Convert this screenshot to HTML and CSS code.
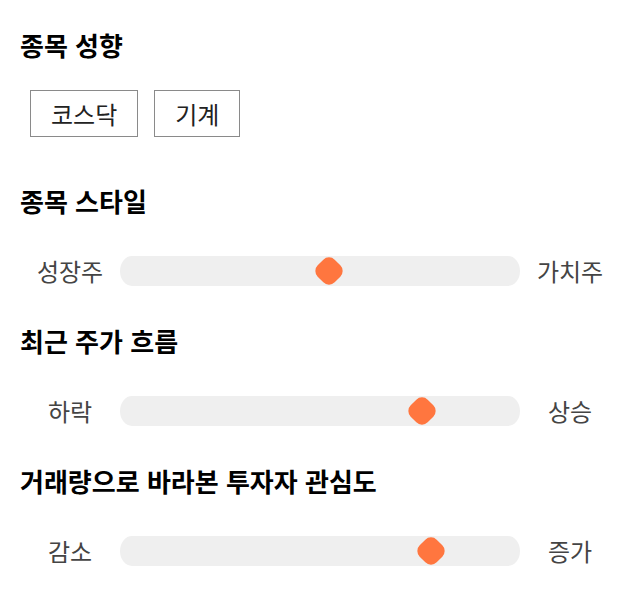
FILE: index.html
```html
<!DOCTYPE html>
<html lang="ko">
<head>
<meta charset="utf-8">
<link rel="stylesheet" href="styles.css">
</head>
<body>
<div class="page">
  <section class="section">
    <h2 class="title">종목 성향</h2>
    <div class="tags">
      <span class="tag">코스닥</span>
      <span class="tag">기계</span>
    </div>
  </section>
  <section class="section">
    <h2 class="title">종목 스타일</h2>
    <div class="slider">
      <span class="label">성장주</span>
      <div class="track"><span class="thumb" style="left: 52.3%"></span></div>
      <span class="label">가치주</span>
    </div>
  </section>
  <section class="section">
    <h2 class="title">최근 주가 흐름</h2>
    <div class="slider">
      <span class="label">하락</span>
      <div class="track"><span class="thumb" style="left: 75.5%"></span></div>
      <span class="label">상승</span>
    </div>
  </section>
  <section class="section">
    <h2 class="title">거래량으로 바라본 투자자 관심도</h2>
    <div class="slider">
      <span class="label">감소</span>
      <div class="track"><span class="thumb" style="left: 77.8%"></span></div>
      <span class="label">증가</span>
    </div>
  </section>
</div>
</body>
</html>
```
FILE: styles.css
```css
* { box-sizing: border-box; }
html, body { margin: 0; padding: 0; background: #fff; }
body {
  font-family: "Noto Sans CJK KR", "Noto Sans", sans-serif;
  color: #111;
}
.page {
  display: flex;
  flex-direction: column;
  gap: 39px;
  padding: 29px 20px 0;
}
.section {
  display: flex;
  flex-direction: column;
  gap: 39px;
}
.section:first-child { gap: 29px; margin-bottom: 9px; }
.title {
  margin: 0;
  font-size: 26px;
  font-weight: 700;
  line-height: 32px;
  color: #000;
}
.tags {
  display: flex;
  gap: 16px;
  padding-left: 10px;
}
.tag {
  display: flex;
  align-items: center;
  height: 47px;
  padding: 0 20px;
  border: 1px solid #8a8a8a;
  font-size: 24px;
  color: #222;
}
.slider {
  display: grid;
  grid-template-columns: 100px 1fr 100px;
  align-items: center;
  height: 30px;
}
.label {
  text-align: center;
  font-size: 24px;
  color: #444;
  line-height: 30px;
}
.track {
  position: relative;
  height: 30px;
  background: #efefef;
  border-radius: 12px / 15px;
}
.thumb {
  position: absolute;
  top: 50%;
  width: 24px;
  height: 24px;
  background: #ff763f;
  border-radius: 8px;
  transform: translate(-50%, -50%) rotate(45deg);
}
```
